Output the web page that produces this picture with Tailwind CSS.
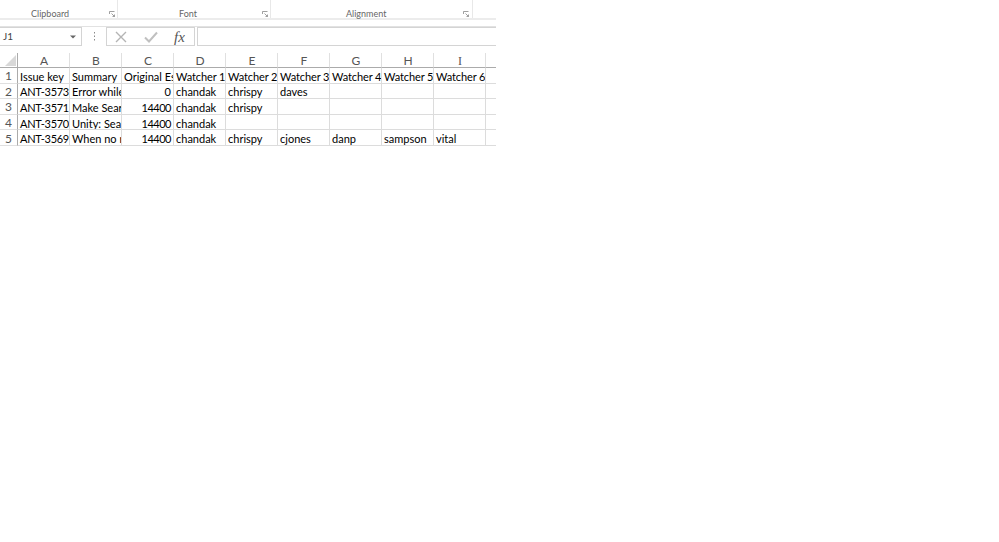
<!DOCTYPE html>
<html><head><meta charset="utf-8">
<script src="https://cdn.jsdelivr.net/npm/@tailwindcss/browser@4"></script>
</head>
<body class="bg-white overflow-hidden">
<div class="w-[999px] h-[542px] bg-white font-['Lato','Open_Sans',sans-serif] overflow-hidden">
  <div class="w-[496px]">
    <!-- ribbon -->
    <div class="flex h-[20px] text-[9px] text-[#666] border-b-2 border-[#ececec]">
      <div class="w-[118px] border-r border-[#e8e8e8] flex items-center pt-[9px] relative">
        <span class="ml-[31px]">Clipboard</span>
        <svg class="absolute left-[109px] top-[11px]" width="6" height="6" viewBox="0 0 6 6" fill="none" stroke="#888" stroke-width=".8"><path d="M.5 3V.5H5.5M2.5 2.5L5.5 5.5M5.5 3.5V5.5H3.5"/></svg>
      </div>
      <div class="w-[153px] border-r border-[#e8e8e8] flex items-center pt-[9px] relative">
        <span class="ml-[61px]">Font</span>
        <svg class="absolute left-[144px] top-[11px]" width="6" height="6" viewBox="0 0 6 6" fill="none" stroke="#888" stroke-width=".8"><path d="M.5 3V.5H5.5M2.5 2.5L5.5 5.5M5.5 3.5V5.5H3.5"/></svg>
      </div>
      <div class="w-[202px] border-r border-[#e8e8e8] flex items-center pt-[9px] relative">
        <span class="ml-[75px]">Alignment</span>
        <svg class="absolute left-[192px] top-[11px]" width="6" height="6" viewBox="0 0 6 6" fill="none" stroke="#888" stroke-width=".8"><path d="M.5 3V.5H5.5M2.5 2.5L5.5 5.5M5.5 3.5V5.5H3.5"/></svg>
      </div>
    </div>
    <div class="h-[7px] border-b border-[#e2e2e2]"></div>
    <!-- formula bar -->
    <div class="flex items-stretch h-[19px] text-[10px] text-[#444]">
      <div class="w-[82px] border border-[#d4d4d4] border-l-0 flex items-center justify-between pl-[3px] pr-[5px]">
        <span>J1</span>
        <svg width="6" height="4" viewBox="0 0 6 4"><path d="M0 .5H6L3 3.5Z" fill="#666"/></svg>
      </div>
      <div class="w-[24px] flex items-center justify-center">
        <svg width="3" height="9" viewBox="0 0 3 9" fill="#8a8a8a"><rect x="1" y="0" width="1" height="1.5"/><rect x="1" y="3.5" width="1" height="1.5"/><rect x="1" y="7" width="1" height="1.5"/></svg>
      </div>
      <div class="w-[89px] border border-[#d4d4d4] relative">
        <svg class="absolute left-[8px] top-[3px]" width="12" height="12" viewBox="0 0 12 12" fill="none" stroke="#b4b4b4" stroke-width="1.4"><path d="M1 1L11 11M11 1L1 11"/></svg>
        <svg class="absolute left-[37px] top-[3px]" width="14" height="12" viewBox="0 0 14 12" fill="none" stroke="#c0c0c0" stroke-width="2"><path d="M1 6.5L5 10.5L13 1.5"/></svg>
        <span class="absolute left-[67px] top-[-2px] font-['Liberation_Serif',serif] italic text-[15px] text-[#555]">fx</span>
      </div>
      <div class="w-[2px]"></div>
      <div class="flex-1 border border-[#d4d4d4] border-r-0"></div>
    </div>
    <!-- sheet -->
    <div class="mt-[7px] grid grid-cols-[18px_repeat(9,52px)_10px] grid-rows-[15px_repeat(5,15.6px)] text-[11px] leading-none text-black">
      <div class="border-r border-b border-[#ababab] relative">
        <svg class="absolute right-[1px] bottom-[1px]" width="11" height="11" viewBox="0 0 11 11"><path d="M11 0V11H0Z" fill="#d8d8d8"/></svg>
      </div>
      <div class="flex items-center justify-center pt-[2px] pl-[1px] text-[12px] border-r border-b border-[#e0e0e0] border-b-[#ababab] text-[#555]">A</div>
      <div class="flex items-center justify-center pt-[2px] pl-[1px] text-[12px] border-r border-b border-[#e0e0e0] border-b-[#ababab] text-[#555]">B</div>
      <div class="flex items-center justify-center pt-[2px] pl-[1px] text-[12px] border-r border-b border-[#e0e0e0] border-b-[#ababab] text-[#555]">C</div>
      <div class="flex items-center justify-center pt-[2px] pl-[1px] text-[12px] border-r border-b border-[#e0e0e0] border-b-[#ababab] text-[#555]">D</div>
      <div class="flex items-center justify-center pt-[2px] pl-[1px] text-[12px] border-r border-b border-[#e0e0e0] border-b-[#ababab] text-[#555]">E</div>
      <div class="flex items-center justify-center pt-[2px] pl-[1px] text-[12px] border-r border-b border-[#e0e0e0] border-b-[#ababab] text-[#555]">F</div>
      <div class="flex items-center justify-center pt-[2px] pl-[1px] text-[12px] border-r border-b border-[#e0e0e0] border-b-[#ababab] text-[#555]">G</div>
      <div class="flex items-center justify-center pt-[2px] pl-[1px] text-[12px] border-r border-b border-[#e0e0e0] border-b-[#ababab] text-[#555]">H</div>
      <div class="flex items-center justify-center pt-[2px] pl-[1px] text-[12px] font-['Liberation_Serif',serif] border-r border-b border-[#e0e0e0] border-b-[#ababab] text-[#555]">I</div>
      <div class="border-b border-[#ababab]"></div>

      <div class="flex items-center justify-center pt-[2px] text-[12px] border-r border-b border-[#e0e0e0] border-r-[#ababab] text-[#555]">1</div>
      <div class="flex items-center pl-[2px] pt-[2px] overflow-hidden whitespace-nowrap border-r border-b border-[#dcdcdc]">Issue key</div>
      <div class="flex items-center pl-[2px] pt-[2px] overflow-hidden whitespace-nowrap border-r border-b border-[#dcdcdc]">Summary</div>
      <div class="flex items-center pl-[2px] pt-[2px] overflow-hidden whitespace-nowrap border-r border-b border-[#dcdcdc]">Original Estimate</div>
      <div class="flex items-center pl-[2px] pt-[2px] overflow-hidden whitespace-nowrap tracking-[-0.1px] border-r border-b border-[#dcdcdc]">Watcher 1</div>
      <div class="flex items-center pl-[2px] pt-[2px] overflow-hidden whitespace-nowrap tracking-[-0.1px] border-r border-b border-[#dcdcdc]">Watcher 2</div>
      <div class="flex items-center pl-[2px] pt-[2px] overflow-hidden whitespace-nowrap tracking-[-0.1px] border-r border-b border-[#dcdcdc]">Watcher 3</div>
      <div class="flex items-center pl-[2px] pt-[2px] overflow-hidden whitespace-nowrap tracking-[-0.1px] border-r border-b border-[#dcdcdc]">Watcher 4</div>
      <div class="flex items-center pl-[2px] pt-[2px] overflow-hidden whitespace-nowrap tracking-[-0.1px] border-r border-b border-[#dcdcdc]">Watcher 5</div>
      <div class="flex items-center pl-[2px] pt-[2px] overflow-hidden whitespace-nowrap tracking-[-0.1px] border-r border-b border-[#dcdcdc]">Watcher 6</div>
      <div class="border-b border-[#dcdcdc]"></div>

      <div class="flex items-center justify-center pt-[2px] text-[12px] border-r border-b border-[#e0e0e0] border-r-[#ababab] text-[#555]">2</div>
      <div class="flex items-center pl-[2px] pt-[2px] overflow-hidden whitespace-nowrap tracking-[-0.3px] border-r border-b border-[#dcdcdc]">ANT-3573</div>
      <div class="flex items-center pl-[2px] pt-[2px] overflow-hidden whitespace-nowrap border-r border-b border-[#dcdcdc]">Error while searching</div>
      <div class="flex items-center justify-end px-[2px] pt-[2px] border-r border-b border-[#dcdcdc]">0</div>
      <div class="flex items-center px-[2px] pt-[2px] border-r border-b border-[#dcdcdc]">chandak</div>
      <div class="flex items-center px-[2px] pt-[2px] border-r border-b border-[#dcdcdc]">chrispy</div>
      <div class="flex items-center px-[2px] pt-[2px] border-r border-b border-[#dcdcdc]">daves</div>
      <div class="border-r border-b border-[#dcdcdc]"></div>
      <div class="border-r border-b border-[#dcdcdc]"></div>
      <div class="border-r border-b border-[#dcdcdc]"></div>
      <div class="border-b border-[#dcdcdc]"></div>

      <div class="flex items-center justify-center pt-[2px] text-[12px] border-r border-b border-[#e0e0e0] border-r-[#ababab] text-[#555]">3</div>
      <div class="flex items-center pl-[2px] pt-[2px] overflow-hidden whitespace-nowrap tracking-[-0.3px] border-r border-b border-[#dcdcdc]">ANT-3571</div>
      <div class="flex items-center pl-[2px] pt-[2px] overflow-hidden whitespace-nowrap border-r border-b border-[#dcdcdc]">Make Search faster</div>
      <div class="flex items-center justify-end px-[2px] pt-[2px] tracking-[-0.5px] border-r border-b border-[#dcdcdc]">14400</div>
      <div class="flex items-center px-[2px] pt-[2px] border-r border-b border-[#dcdcdc]">chandak</div>
      <div class="flex items-center px-[2px] pt-[2px] border-r border-b border-[#dcdcdc]">chrispy</div>
      <div class="border-r border-b border-[#dcdcdc]"></div>
      <div class="border-r border-b border-[#dcdcdc]"></div>
      <div class="border-r border-b border-[#dcdcdc]"></div>
      <div class="border-r border-b border-[#dcdcdc]"></div>
      <div class="border-b border-[#dcdcdc]"></div>

      <div class="flex items-center justify-center pt-[2px] text-[12px] border-r border-b border-[#e0e0e0] border-r-[#ababab] text-[#555]">4</div>
      <div class="flex items-center pl-[2px] pt-[2px] overflow-hidden whitespace-nowrap tracking-[-0.3px] border-r border-b border-[#dcdcdc]">ANT-3570</div>
      <div class="flex items-center pl-[2px] pt-[2px] overflow-hidden whitespace-nowrap border-r border-b border-[#dcdcdc]">Unity: Search</div>
      <div class="flex items-center justify-end px-[2px] pt-[2px] tracking-[-0.5px] border-r border-b border-[#dcdcdc]">14400</div>
      <div class="flex items-center px-[2px] pt-[2px] border-r border-b border-[#dcdcdc]">chandak</div>
      <div class="border-r border-b border-[#dcdcdc]"></div>
      <div class="border-r border-b border-[#dcdcdc]"></div>
      <div class="border-r border-b border-[#dcdcdc]"></div>
      <div class="border-r border-b border-[#dcdcdc]"></div>
      <div class="border-r border-b border-[#dcdcdc]"></div>
      <div class="border-b border-[#dcdcdc]"></div>

      <div class="flex items-center justify-center pt-[2px] text-[12px] border-r border-b border-[#e0e0e0] border-r-[#ababab] text-[#555]">5</div>
      <div class="flex items-center pl-[2px] pt-[2px] overflow-hidden whitespace-nowrap tracking-[-0.3px] border-r border-b border-[#dcdcdc]">ANT-3569</div>
      <div class="flex items-center pl-[2px] pt-[2px] overflow-hidden whitespace-nowrap border-r border-b border-[#dcdcdc]">When no results</div>
      <div class="flex items-center justify-end px-[2px] pt-[2px] tracking-[-0.5px] border-r border-b border-[#dcdcdc]">14400</div>
      <div class="flex items-center px-[2px] pt-[2px] border-r border-b border-[#dcdcdc]">chandak</div>
      <div class="flex items-center px-[2px] pt-[2px] border-r border-b border-[#dcdcdc]">chrispy</div>
      <div class="flex items-center px-[2px] pt-[2px] border-r border-b border-[#dcdcdc]">cjones</div>
      <div class="flex items-center px-[2px] pt-[2px] border-r border-b border-[#dcdcdc]">danp</div>
      <div class="flex items-center px-[2px] pt-[2px] border-r border-b border-[#dcdcdc]">sampson</div>
      <div class="flex items-center px-[2px] pt-[2px] border-r border-b border-[#dcdcdc]">vital</div>
      <div class="border-b border-[#dcdcdc]"></div>
    </div>
  </div>
</div>
</body></html>
